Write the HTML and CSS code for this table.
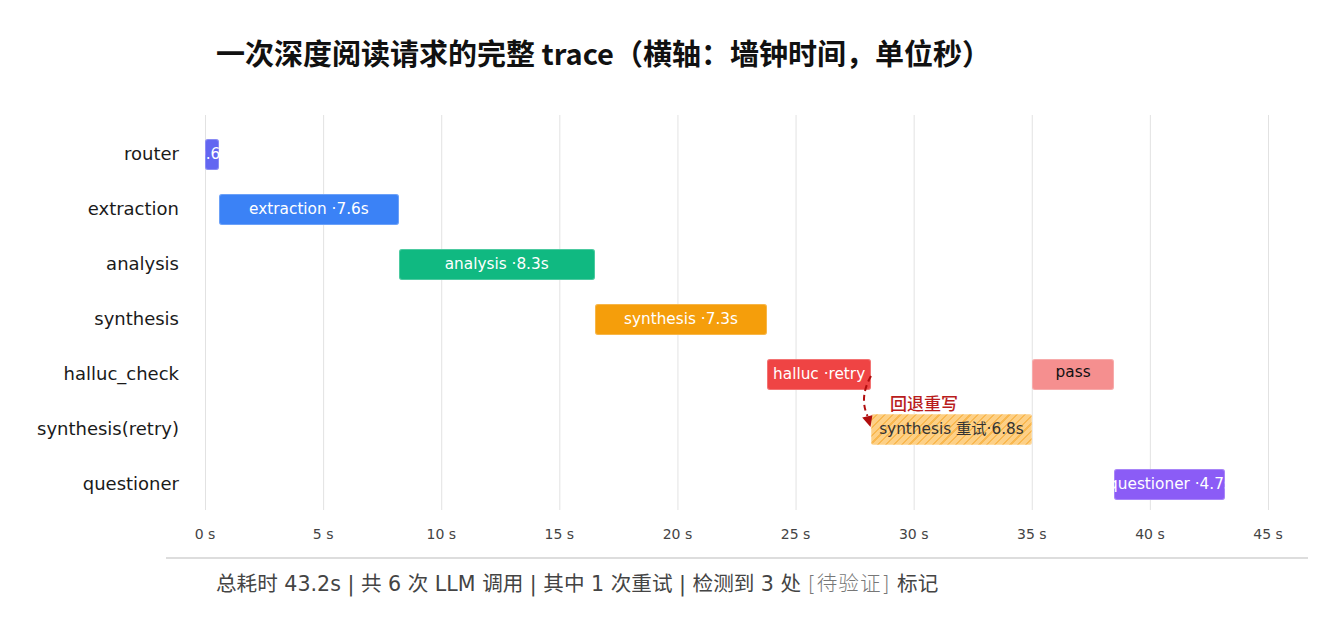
FILE: index.html
```html
<!DOCTYPE html>
<html lang="zh">
<head>
<meta charset="utf-8">
<title>trace</title>
<link rel="stylesheet" href="styles.css">
</head>
<body>
<div class="page">
  <h1 class="title">一次深度阅读请求的完整 trace（横轴：墙钟时间，单位秒）</h1>
  <div class="chart">
    <div class="ylabels">
      <div class="ylabel">router</div>
      <div class="ylabel">extraction</div>
      <div class="ylabel">analysis</div>
      <div class="ylabel">synthesis</div>
      <div class="ylabel">halluc_check</div>
      <div class="ylabel">synthesis(retry)</div>
      <div class="ylabel">questioner</div>
    </div>
    <div class="plot">
      <div class="track">
        <div class="bar bar-router" style="margin-left:0%;width:1.333%"><span>0.6s</span></div>
      </div>
      <div class="track">
        <div class="bar bar-extraction" style="margin-left:1.333%;width:16.889%"><span>extraction ·7.6s</span></div>
      </div>
      <div class="track">
        <div class="bar bar-analysis" style="margin-left:18.222%;width:18.444%"><span>analysis ·8.3s</span></div>
      </div>
      <div class="track">
        <div class="bar bar-synthesis" style="margin-left:36.667%;width:16.222%"><span>synthesis ·7.3s</span></div>
      </div>
      <div class="track">
        <div class="bar bar-halluc" style="margin-left:52.889%;width:9.778%"><span>halluc ·retry</span></div>
        <div class="bar bar-pass" style="margin-left:15.111%;width:7.778%"><span>pass</span></div>
      </div>
      <div class="track">
        <div class="bar bar-retry" style="margin-left:62.667%;width:15.111%"><span>synthesis 重试·6.8s</span></div>
      </div>
      <div class="track">
        <div class="bar bar-questioner" style="margin-left:85.556%;width:10.444%"><span>questioner ·4.7s</span></div>
      </div>
      <svg class="arrow" width="1063" height="395" viewBox="0 0 1063 395">
        <path d="M666 261 Q654 282 662.5 301" fill="none" stroke="#b00d0d" stroke-width="2" stroke-dasharray="6 4"/>
        <polygon points="665.5,312 657.2,302.6 667.4,300.2" fill="#b00d0d"/>
      </svg>
      <div class="note">回退重写</div>
    </div>
  </div>
  <div class="ticks">
    <span>0 s</span><span>5 s</span><span>10 s</span><span>15 s</span><span>20 s</span>
    <span>25 s</span><span>30 s</span><span>35 s</span><span>40 s</span><span>45 s</span>
  </div>
  <div class="rule"></div>
  <p class="footer">总耗时 43.2s | 共 6 次 LLM 调用 | 其中 1 次重试 | 检测到 3 处 <span class="pending">[待验证]</span> 标记</p>
</div>
</body>
</html>
```

FILE: styles.css
```css
html, body {
  margin: 0;
  padding: 0;
  background: #ffffff;
}

body {
  font-family: "DejaVu Sans", "Noto Sans CJK SC", sans-serif;
  color: #222;
}

.page {
  width: 1336px;
  height: 633px;
  overflow: hidden;
}

.title {
  margin: 0;
  padding: 32px 0 0 216px;
  font-family: "Noto Sans CJK SC", "Noto Sans", sans-serif;
  font-size: 29px;
  line-height: 40px;
  font-weight: 700;
  color: #111;
}

.chart {
  display: flex;
  margin-top: 43px;
}

.ylabels {
  width: 205px;
  box-sizing: border-box;
  padding: 12px 26px 0 0;
  display: flex;
  flex-direction: column;
}

.ylabel {
  height: 55px;
  display: flex;
  align-items: center;
  justify-content: flex-end;
  font-size: 18px;
  color: #1a1a1a;
  padding-bottom: 2px;
  box-sizing: border-box;
}

.plot {
  position: relative;
  width: 1063px;
  height: 395px;
  border-right: 1px solid #e2e2e2;
  background-image: linear-gradient(to right, #e2e2e2 0, #e2e2e2 1px, transparent 1px);
  background-size: calc(100% / 9) 100%;
  background-repeat: repeat-x;
}

.plot::before {
  content: "";
  display: block;
  height: 12px;
}

.track {
  height: 55px;
  display: flex;
  align-items: center;
}

.bar {
  flex: none;
  height: 31px;
  box-sizing: border-box;
  border-radius: 3px;
  display: flex;
  align-items: center;
  justify-content: center;
  overflow: hidden;
  white-space: nowrap;
  font-size: 15.3px;
  line-height: 31px;
  color: #ffffff;
  box-shadow: inset 0 0 0 1px rgba(255, 255, 255, 0.25);
}

.bar span {
  flex: none;
}

.bar-router { background: #6366f1; }
.bar-extraction { background: #3b82f6; }
.bar-analysis { background: #10b981; }
.bar-synthesis { background: #f59e0b; }
.bar-halluc { background: #ef4444; }
.bar-questioner { background: #8b5cf6; }

.bar-pass {
  background: #f58f8f;
  color: #111;
}

.bar-pass span {
  margin-top: -4px;
}

.bar-retry {
  color: #333;
  background-color: #fdd086;
  background-image: repeating-linear-gradient(135deg, #fdd086 0, #fdd086 4px, #f9b850 4px, #f9b850 5.5px);
}

.arrow {
  position: absolute;
  left: 0;
  top: 0;
  overflow: visible;
  pointer-events: none;
}

.note {
  position: absolute;
  left: 685px;
  top: 277px;
  font-family: "Noto Sans CJK SC", sans-serif;
  font-size: 17px;
  line-height: 22px;
  color: #b91c1c;
  font-weight: 500;
}

.ticks {
  margin: 12px 0 0 146px;
  display: grid;
  grid-template-columns: repeat(10, 118.111px);
  font-size: 14px;
  line-height: 20px;
  color: #444;
}

.ticks span {
  text-align: center;
}

.rule {
  margin: 13px 0 0 166px;
  width: 1142px;
  height: 2px;
  background: #dddddd;
}

.footer {
  margin: 12px 0 0 216px;
  font-size: 20.6px;
  line-height: 26px;
  color: #444;
}

.pending {
  color: #777;
  font-weight: 300;
  letter-spacing: 1px;
}
```
